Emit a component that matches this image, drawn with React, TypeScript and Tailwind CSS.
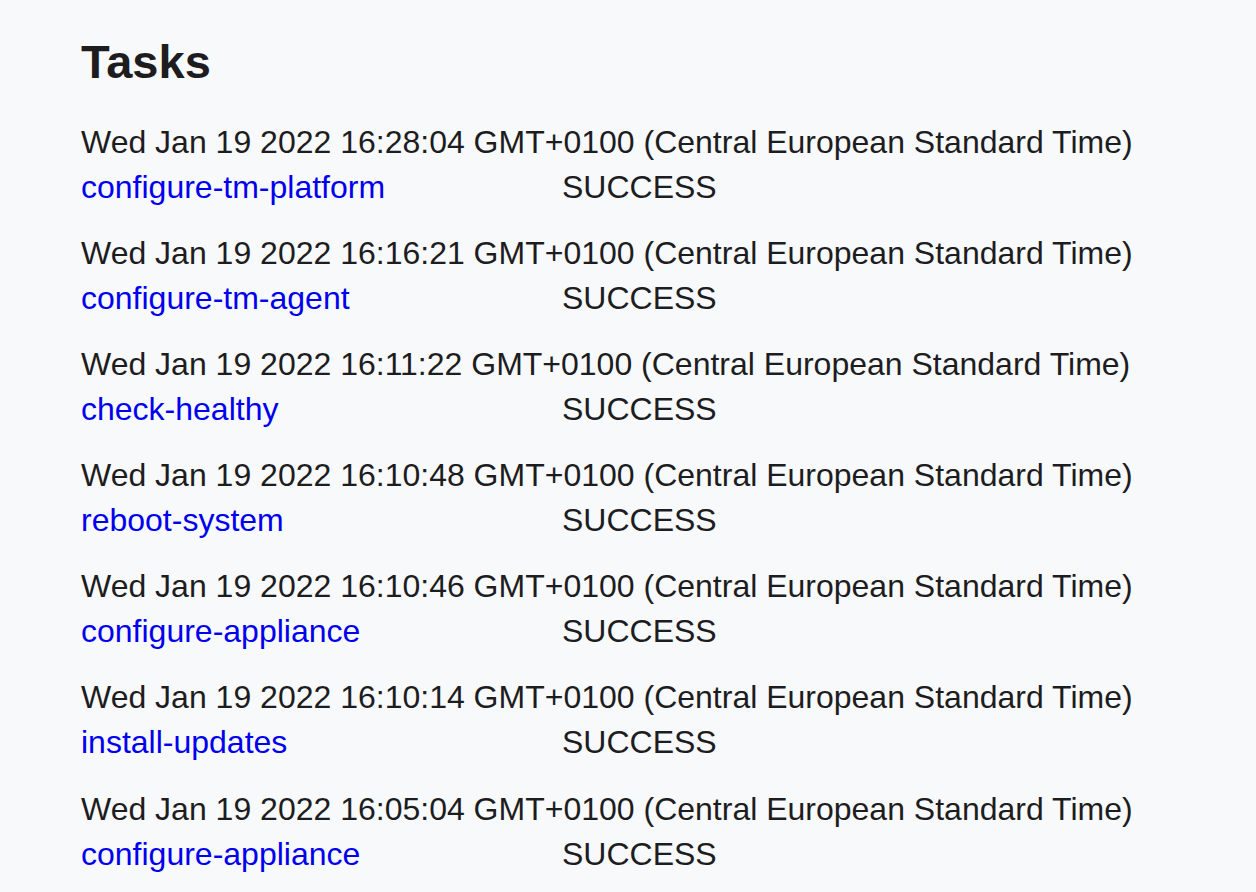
import React from 'react';

type Task = { date: string; name: string; status: string };

const tasks: Task[] = [
  { date: 'Wed Jan 19 2022 16:28:04 GMT+0100 (Central European Standard Time)', name: 'configure-tm-platform', status: 'SUCCESS' },
  { date: 'Wed Jan 19 2022 16:16:21 GMT+0100 (Central European Standard Time)', name: 'configure-tm-agent', status: 'SUCCESS' },
  { date: 'Wed Jan 19 2022 16:11:22 GMT+0100 (Central European Standard Time)', name: 'check-healthy', status: 'SUCCESS' },
  { date: 'Wed Jan 19 2022 16:10:48 GMT+0100 (Central European Standard Time)', name: 'reboot-system', status: 'SUCCESS' },
  { date: 'Wed Jan 19 2022 16:10:46 GMT+0100 (Central European Standard Time)', name: 'configure-appliance', status: 'SUCCESS' },
  { date: 'Wed Jan 19 2022 16:10:14 GMT+0100 (Central European Standard Time)', name: 'install-updates', status: 'SUCCESS' },
  { date: 'Wed Jan 19 2022 16:05:04 GMT+0100 (Central European Standard Time)', name: 'configure-appliance', status: 'SUCCESS' },
];

const App: React.FC = () => {
  return (
    <div
      className="min-h-screen w-full bg-[#f8f9fb] text-[#1d1d1f] pl-[81px] pt-[32px]"
      style={{ fontFamily: '"Liberation Sans", Arial, sans-serif' }}
    >
      <h1 className="text-[47px] leading-[60px] font-bold">Tasks</h1>
      <div className="mt-[27.5px] flex flex-col gap-[21.2px] text-[32px] leading-[45px]">
        {tasks.map((t, i) => (
          <div key={i}>
            <div>{t.date}</div>
            <div className="flex">
              <a href="#" className="w-[481px] text-[#0000ee]">{t.name}</a>
              <span>{t.status}</span>
            </div>
          </div>
        ))}
      </div>
    </div>
  );
};

export default App;
